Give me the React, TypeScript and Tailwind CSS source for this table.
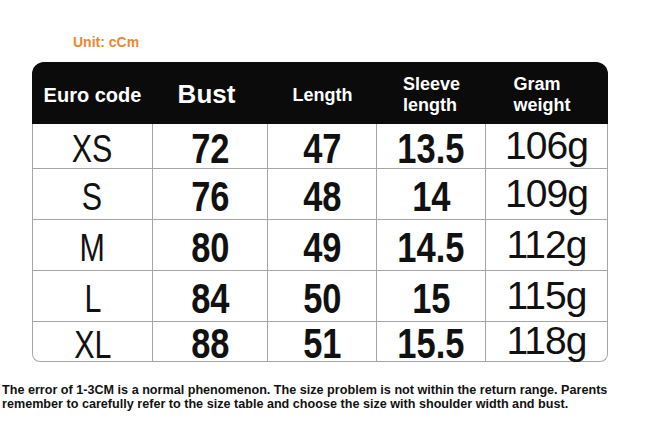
const rows = [
  { code: 'XS', bust: '72', length: '47', sleeve: '13.5', weight: '106g', h: 'h-[44px]' },
  { code: 'S', bust: '76', length: '48', sleeve: '14', weight: '109g', h: 'h-[51px]' },
  { code: 'M', bust: '80', length: '49', sleeve: '14.5', weight: '112g', h: 'h-[51px]' },
  { code: 'L', bust: '84', length: '50', sleeve: '15', weight: '115g', h: 'h-[51px]' },
  { code: 'XL', bust: '88', length: '51', sleeve: '15.5', weight: '118g', h: 'h-[40px]' },
]

function Num({ children }: { children: string }) {
  return (
    <div className="flex items-center justify-center pt-[5px] border-r border-[#a5a5a5] text-[42px] leading-none font-bold">
      <span className="inline-block scale-x-[0.82]">{children}</span>
    </div>
  )
}

export default function App() {
  return (
    <div className="w-[645px] h-[421px] bg-white overflow-hidden flex flex-col font-['Liberation_Sans',Arial,sans-serif] text-[#111]">
      {/* Unit label */}
      <p className="ml-[73px] mt-[34px] text-[14px] leading-[16px] font-bold text-[#ea8733]">Unit: cCm</p>

      {/* Size table */}
      <div className="ml-[32px] mt-[12px] w-[576px]">
        <div className="h-[62px] bg-[#0b0b0b] rounded-t-[12px] grid grid-cols-[121px_115px_109px_109px_122px] text-white font-bold">
          <div className="flex items-center justify-center pt-[3px] text-[20px]">Euro code</div>
          <div className="flex items-center justify-center pt-[2px] pr-[8px] text-[26px]">Bust</div>
          <div className="flex items-center justify-center pt-[4px] text-[18px]">Length</div>
          <div className="flex items-center justify-center pt-[3px] text-[18px] leading-[21px]">
            <div>Sleeve<br />length</div>
          </div>
          <div className="flex items-center justify-center pt-[3px] pr-[10px] text-[18px] leading-[21px]">
            <div>Gram<br />weight</div>
          </div>
        </div>
        <div className="border-x border-b border-[#a5a5a5] rounded-b-[8px]">
          {rows.map((r, i) => (
            <div
              key={r.code}
              className={`grid grid-rows-1 grid-cols-[120px_115px_109px_109px_121px] ${r.h} ${i > 0 ? 'border-t border-[#a5a5a5]' : ''}`}
            >
              <div className="flex items-center justify-center pt-[5px] border-r border-[#a5a5a5] text-[39px] leading-none">
                <span className="inline-block scale-x-[0.78]">{r.code}</span>
              </div>
              <Num>{r.bust}</Num>
              <Num>{r.length}</Num>
              <Num>{r.sleeve}</Num>
              <div className="flex items-center justify-center pb-[2px] text-[39px] leading-none tracking-[-1px]">{r.weight}</div>
            </div>
          ))}
        </div>
      </div>

      {/* Note */}
      <p className="ml-[2px] mt-[21px] text-[13px] leading-[14px] font-bold whitespace-nowrap origin-left scale-x-[0.97]">
        The error of 1-3CM is a normal phenomenon. The size problem is not within the return range. Parents
        <br />
        remember to carefully refer to the size table and choose the size with shoulder width and bust.
      </p>
    </div>
  )
}
